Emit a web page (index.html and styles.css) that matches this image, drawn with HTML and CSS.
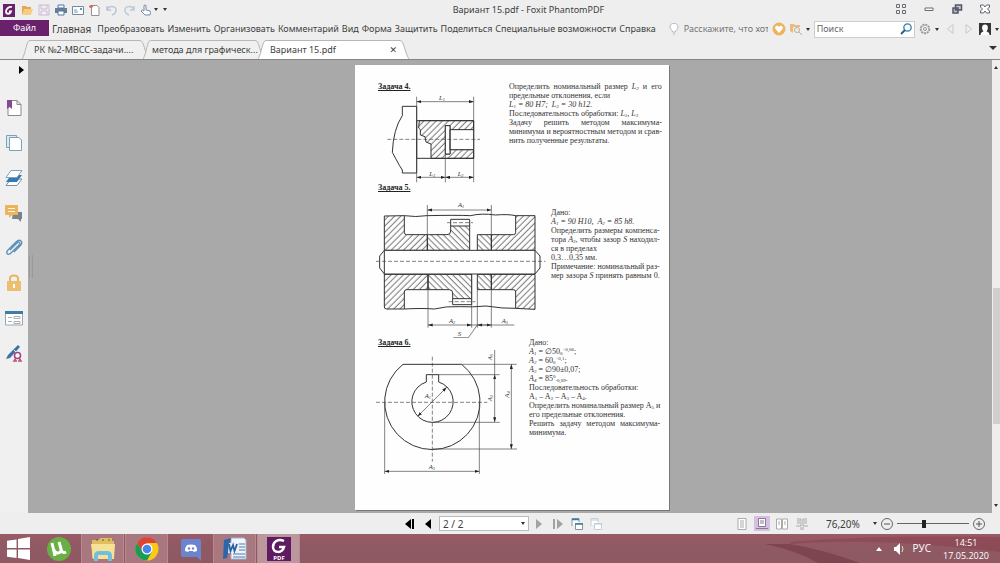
FILE: index.html
```html
<!DOCTYPE html>
<html lang="ru">
<head>
<meta charset="utf-8">
<title>Вариант 15.pdf - Foxit PhantomPDF</title>
<link rel="stylesheet" href="styles.css">
</head>
<body>
<header class="titlebar">
  <div class="quick">
    <svg class="i14" viewBox="0 0 14 14"><path fill="#68216a" d="M1 1h12v13H1z"/><path d="M10 4C7 3 4 6 4 8.500c0 3 4 3 5 0H7" fill="none" stroke="#fff" stroke-width="1.800"/></svg>
    <button aria-label="Открыть"><svg class="i12" viewBox="0 0 12 12"><path fill="#e5a64f" d="M1 11V2h4l1 1h4v2H4z"/><path fill="#f6cd86" d="M3 5h9l-2 6H1z"/></svg></button>
    <button aria-label="Сохранить"><svg class="i12" viewBox="0 0 12 12"><path fill="#f4eff6" stroke="#c9bbd2" d="M1 1h10v10H1zM3 1v4h6V1M3 11V7h6v4"/></svg></button>
    <button aria-label="Печать"><svg class="i12" viewBox="0 0 12 12"><path fill="#667f9b" d="M0 4h12v5H0z"/><path fill="#fff" stroke="#52779e" d="M3 1h6v3H3zM3 7h6v4H3z"/></svg></button>
    <button aria-label="Почта"><svg class="i12" viewBox="0 0 12 12"><path fill="#fff" stroke="#798694" d="M.5 2.500h11v8H.5z"/><path stroke="#6d95bd" fill="none" d="M2 8h4M2 6h3"/><path fill="#559ac7" d="M8 4h2v2H8z"/></svg></button>
    <button aria-label="Создать"><svg class="i12" viewBox="0 0 12 12"><path fill="#fff" stroke="#9b8e8d" d="M2.500 1.500H8l2 2v8H2.500z"/><path d="M2 1v3M0 2.500h4" stroke="#dc6450" stroke-width="1.500"/></svg></button>
    <button aria-label="Отменить"><svg class="i12" viewBox="0 0 12 12"><path d="M1 2v4h4M1 6c2-5 9-4 9 0 0 2-1 4-4 5" fill="none" stroke="#b8c5d5" stroke-width="1.500"/></svg></button>
    <button aria-label="Повторить"><svg class="i12" viewBox="0 0 12 12"><path d="M11 2v4H7M11 6C9 1 2 2 2 6c0 2 1 4 4 5" fill="none" stroke="#b8cbd9" stroke-width="1.500"/></svg></button>
    <button aria-label="Рука" class="hand"><svg class="i12" viewBox="0 0 12 12"><path fill="#fff" stroke="#728ba6" d="M4 7V1.500q1-1 2 0V6l4 1q1 1 0 4H5L1 7q1-2 3 0z"/></svg><i class="caret"></i></button>
    <button aria-label="Настроить" class="more"><i class="caret"></i></button>
  </div>
  <h1>Вариант 15.pdf - Foxit PhantomPDF</h1>
  <div class="window">
    <button aria-label="Сетка"><svg class="i12" viewBox="0 0 12 12"><path fill="none" stroke="#6a6e73" d="M1.500 1.500h3v3h-3zM7.500 1.500h3v3h-3zM1.500 7.500h3v3h-3zM7.500 7.500h3v3h-3z"/></svg></button>
    <button aria-label="Свернуть"><svg class="i12" viewBox="0 0 12 12"><path fill="#fff" stroke="#676b73" d="M2 5h8v2.500H2z"/></svg></button>
    <button aria-label="Развернуть"><svg class="i12" viewBox="0 0 12 12"><path fill="#c1c4ca" stroke="#50576a" stroke-width="1.500" d="M4.500 2h6v5h-6zM2 5h5v5H2z"/></svg></button>
    <button aria-label="Закрыть"><svg class="i12" viewBox="0 0 12 12"><path fill="#fff" stroke="#60656d" d="M1.500 2h3L6 4l1.500-2h3v2L8.500 6l2 2v2h-3L6 8l-1.500 2h-3V8l2-2-2-2z"/></svg></button>
  </div>
</header>
<nav class="menu">
  <button class="file">Файл</button>
  <div class="items">
    <button class="home">Главная</button><button>Преобразовать</button><button>Изменить</button><button>Организовать</button><button>Комментарий</button><button>Вид</button><button>Форма</button><button>Защитить</button><button>Поделиться</button><button>Специальные возможности</button><button>Справка</button>
  </div>
  <div class="tools">
    <svg class="i12" viewBox="0 0 12 12"><path fill="#fff" stroke="#b5b7ba" d="M4.500 9C4.500 7 2 6 2 4c0-5 8-5 8 0 0 2-2.500 3-2.500 5zM5 11h2"/></svg>
    <input class="tell" aria-label="Расскажите, что хотите сделать" value="Расскажите, что хотите">
    <button aria-label="Избранное"><svg class="i14" viewBox="0 0 14 14"><circle cx="7" cy="7" r="6.500" fill="#ecb45e"/><path fill="#fff" d="M7 11L3.500 7C2 4 5.500 2.500 7 5c1.500-2.500 5-1 3.500 2z"/></svg></button>
    <button class="find" aria-label="Найти в папке"><svg class="i12" viewBox="0 0 12 12"><path fill="#edba7d" d="M0 1h4l1 1h5v2H3v6L0 8z"/><circle cx="7" cy="7" r="2.500" fill="#eee" stroke="#c8a888"/><path stroke="#bcae9f" d="m9 9 3 3"/></svg><i class="caret"></i></button>
    <div class="search"><input type="text" aria-label="Поиск" placeholder="Поиск"><button aria-label="Искать"><svg class="i12" viewBox="0 0 12 12"><circle cx="7.500" cy="4.500" r="3.700" fill="#f5fafc" stroke="#397d9f" stroke-width="1.300"/><path stroke="#27618f" stroke-width="2" d="m5 7-4 4"/></svg></button></div>
    <button class="find" aria-label="Параметры"><svg class="i12" viewBox="0 0 12 12"><circle cx="6" cy="6" r="4.500" fill="none" stroke="#929599" stroke-width="1.500" stroke-dasharray="2 1"/><circle cx="6" cy="6" r="3.700" fill="#f5f5f5" stroke="#999" stroke-width=".7"/><circle cx="6" cy="6" r="1.500" fill="none" stroke="#929599"/></svg><i class="caret"></i></button>
    <button class="step" aria-label="Назад"><svg class="i12" viewBox="0 0 12 12"><path fill="none" stroke="#c9c9cb" d="M9 1.500v9L3.500 6z"/></svg></button>
    <button class="step" aria-label="Вперёд"><svg class="i12" viewBox="0 0 12 12"><path fill="none" stroke="#c9c9cb" d="M4 1.500v9L9.500 6z"/></svg></button>
    <button class="find" aria-label="Пользователь"><svg class="i12" viewBox="0 0 12 12"><path fill="#343536" d="M0 0h12v12H0z"/><path fill="#fff" d="M1.500 12q0-3 3-3.500C2 5 3 1.500 6 1.500S10 5 7.500 8.500q3 .5 3 3.500z"/></svg><i class="caret"></i></button>
  </div>
</nav>
<div class="tabs">
  <button class="tab"><svg viewBox="0 0 127 20" preserveAspectRatio="none"><path d="M0 20C4 14 4 .5 8 .5h110c4 0 5 14 9 19.500"/></svg><span>РК №2-МВСС-задачи....</span></button>
  <button class="tab second"><svg viewBox="0 0 127 20" preserveAspectRatio="none"><path d="M0 20C4 14 4 .5 8 .5h110c4 0 5 14 9 19.500"/></svg><span>метода для графическ...</span></button>
  <button class="tab active"><svg viewBox="0 0 151 20" preserveAspectRatio="none"><path d="M0 20C4 14 4 .5 8 .5h134c4 0 5 14 9 19.500"/></svg><span>Вариант 15.pdf</span><b>✕</b></button>
  <i class="caret big"></i>
</div>
<main class="work">
  <aside class="side">
    <button class="expand" aria-label="Развернуть панель"><svg viewBox="0 0 5 8"><path d="M0 0v8l5-4z"/></svg></button>
    <button aria-label="Закладки"><svg viewBox="0 0 18 18"><path fill="#fff" stroke="#91888b" d="M3 1.500h9l4 4v11H3zM12 1.500v4h4"/><path fill="#824b91" d="M2 1h5v9L4.500 8 2 10z"/></svg></button>
    <button aria-label="Страницы"><svg viewBox="0 0 18 18"><path fill="#dcebf2" stroke="#7ba1b8" d="M1.500 1.500h10v12h-10z"/><path fill="#fff" stroke="#7ba1b8" d="M4.500 3.500H14l2.500 2.500v10.500h-12z"/></svg></button>
    <button aria-label="Слои"><svg viewBox="0 0 18 18"><path fill="#fff" stroke="#7293ad" d="M6 10h11l-5 6.500H1z"/><path fill="#3977b2" d="M6 6h11l-5 7H1z"/><path fill="#fff" stroke="#7ca4bc" d="M6 1.500h11l-5 7H1z"/></svg></button>
    <button aria-label="Комментарии"><svg viewBox="0 0 18 18"><path fill="#7b8389" d="M8 8h9v7h-1v3l-3-3H7z"/><path fill="#ecb45f" d="M0 1h13v10H7l-3 3v-3H0z"/><path d="M3 4.500h7M3 7.500h7" stroke="#fff3d8"/></svg></button>
    <button aria-label="Вложения"><svg viewBox="0 0 18 18"><path d="m5 11 7-7c2-2 4 0 2 2l-8 8c-3 3-6 0-3-3l8-8c4-4 8 0 4 4l-6 6" fill="none" stroke="#5b8eb4" stroke-width="1.300"/></svg></button>
    <button aria-label="Защита"><svg viewBox="0 0 18 18"><path d="M5 8V4.500c0-4 8-4 8 0V8" fill="none" stroke="#e9b461" stroke-width="2"/><path fill="#edbd71" d="M2 7h14v10H2z"/><path d="M9 10v4" stroke="#fff" stroke-width="2"/></svg></button>
    <button aria-label="Поля"><svg viewBox="0 0 18 18"><path fill="#fff" stroke="#9ba6b0" d="M.5 3h17v13H.5z"/><path fill="#3e7ba5" d="M0 2h18v3H0z"/><path fill="none" stroke="#a9b0b5" d="M3 8.500h4M9 7.500h6v2H9zM3 12.500h4M9 12.500h6v2H9z"/></svg></button>
    <button aria-label="Подписи"><svg viewBox="0 0 18 18"><path d="m1 15 4-1L15 3l-2-2L3 11z" fill="#3974a5"/><path d="m9 6 2 2" stroke="#fff"/><circle cx="12.500" cy="11.500" r="3" fill="#fff" stroke="#a43f83" stroke-width="1.500"/><path d="m11 14-2 3h3M14 14l2 3h-3" stroke="#b94f76" fill="none" stroke-width="1.500"/></svg></button>
  </aside>
  <div class="canvas">
    <i class="grip"></i>
    <article class="paper">
      <section class="task t4">
        <div>
          <h2>Задача 4.</h2>
          <svg class="fig" viewBox="18 57 393 270" width="131" height="90">
            <defs>
              <pattern id="h" width="13" height="13" patternUnits="userSpaceOnUse" patternTransform="rotate(45)"><path d="M6 0v13" stroke="#333" stroke-width="2"/></pattern>
              <pattern id="g" width="13" height="13" patternUnits="userSpaceOnUse" patternTransform="rotate(-45)"><path d="M6 0v13" stroke="#333" stroke-width="2"/></pattern>
              <marker id="a" viewBox="0 0 12 8" markerUnits="userSpaceOnUse" markerWidth="14" markerHeight="10" refX="12" refY="4" orient="auto-start-reverse"><path fill="#222" d="M0 0l12 4-12 4z"/></marker>
            </defs>
            <g class="ln">
              <path d="M140 97H97v28Q70 165 67 235L88 274l9 14v9h43z"/>
              <path fill="url(#h)" d="M148 140h163v28h-71v-13h-14v85h14v-13h71v26H183v-43l-15-6-3-16-14-5v-16l-5-5z"/>
              <path d="M140 140h171v113H140z"/>
              <path fill="#fff" d="M226 155h14v85h-14zM240 167h71v60h-71z"/>
            </g>
            <path class="thin" d="M140 68v257M311 68v72M311 253v72M226 240v85"/>
            <path class="dash" d="M52 196h278"/>
            <path class="dim" d="M140 83h171"/><path class="dim" d="M140 310h86"/><path class="dim" d="M226 310h85"/>
            <text x="207" y="78">L<tspan dy="3">1</tspan></text><text x="178" y="305">L<tspan dy="3">3</tspan></text><text x="263" y="305">L<tspan dy="3">2</tspan></text>
          </svg>
        </div>
        <div class="prose">
          <p class="fill">Определить номинальный размер <em>L<sub>2</sub></em> и его</p>
          <p>предельные отклонения, если</p>
          <p><em>L<sub>1</sub> = 80 H7;&nbsp; L<sub>3</sub> = 30 h12.</em></p>
          <p>Последовательность обработки: <em>L<sub>1</sub>, L<sub>3</sub></em></p>
          <p class="fill">Задачу решить методом максимума-</p>
          <p class="fill">минимума и вероятностным методом и срав-</p>
          <p>нить полученные результаты.</p>
        </div>
      </section>
      <section class="task t5">
        <div>
          <h2>Задача 5.</h2>
          <svg class="fig" viewBox="18 -3 525 432" width="175" height="144">
            <g class="ln">
              <path fill="url(#h)" d="M43 63l60-1v50q0 7 7 7h62v47H43zM43 238h131v46h-64q-7 0-7 7v51H50q-7 0-7-6z"/>
              <path fill="url(#h)" d="M437 62h58v104H364v-47h66q7 0 7-7zM364 238h131v105l-58-3v-49q0-7-7-7h-66z"/>
              <path fill="url(#g)" d="M172 119h59q11 0 11-11V93h57v73H172zM174 238h131v73h-57v-17q0-10-10-10h-64z"/>
              <path fill="url(#g)" d="M322 119h42v47h-42zM322 238h42v46h-42z"/>
              <path d="M242 93V73h57v20M248 311v18h57v-18M103 62q34 5 68 0 90-2 130 0 34-8 75-2 40-3 61 2M103 342q55-3 90 0 35-9 75-7 40 2 80-2 50 8 89 7"/>
              <path fill="#fff" d="M43 166h452v71H43zM43 166l-14 17v36l14 18M495 166l15 17v36l-15 18"/>
            </g>
            <path class="thin" d="M172 30v90M364 30v90M174 238v160M305 311v87M322 284v114M364 284v114M305 238v73M322 390l-27 38h-45"/>
            <path class="dash" d="M18 199h508M231 83h78M236 320h80"/>
            <path class="dim" d="M172 45h192"/><path class="dim" d="M174 390h131"/><path class="dim" d="M364 390h-42"/><path class="thin" d="M305 390h128"/>
            <text x="264" y="37">A<tspan dy="3">1</tspan></text><text x="237" y="385">A<tspan dy="3">2</tspan></text><text x="395" y="385">A<tspan dy="3">3</tspan></text><text x="263" y="423">S</text>
          </svg>
        </div>
        <div class="prose">
          <p>Дано:</p>
          <p><em>A<sub>1</sub> = 90 H10,&nbsp; A<sub>2</sub> = 85 h8.</em></p>
          <p class="fill">Определить размеры компенса-</p>
          <p class="fill">тора <em>A<sub>3</sub></em>, чтобы зазор <em>S</em> находил-</p>
          <p>ся в пределах</p>
          <p>0,3…0,35 мм.</p>
          <p class="fill">Примечание: номинальный раз-</p>
          <p class="fill">мер зазора <em>S</em> принять равным 0.</p>
        </div>
      </section>
      <section class="task t6">
        <div>
          <h2>Задача 6.</h2>
          <svg class="fig" viewBox="18 42 459 384" width="153" height="128">
            <g class="ln">
              <path d="M99 88h176A143 143 0 1 1 99 88zM169 141v-22h37v22A62 62 0 1 1 169 141z"/>
            </g>
            <path class="thin" d="M275 88h165M206 119h183M187 262h202M187 342h254M44 202v215M328 202v215M374 45v74"/>
            <path class="dash" d="M18 202h334M187 65v315"/>
            <path class="dim" d="M143 244l87-87"/><path class="dim" d="M374 119v142"/><path class="dim" d="M424 88v254"/><path class="dim" d="M44 409h284"/>
            <text x="164" y="190">A<tspan dy="3">1</tspan></text><text x="176" y="401">A<tspan dy="3">3</tspan></text>
            <text transform="translate(367 199) rotate(-90)">A<tspan dy="3">2</tspan></text><text transform="translate(367 76) rotate(-90)">A<tspan dy="3">5</tspan></text><text transform="translate(417 188) rotate(-90)">A<tspan dy="3">4</tspan></text>
          </svg>
        </div>
        <div class="prose">
          <p>Дано:</p>
          <p><em>A<sub>1</sub></em> = ∅50<sub>0</sub><sup>+0,06</sup>;</p>
          <p><em>A<sub>2</sub></em> = 60<sub>0</sub><sup>+0,1</sup>;</p>
          <p><em>A<sub>3</sub></em> = ∅90±0,07;</p>
          <p><em>A<sub>4</sub></em> = 85<sup>0</sup><sub>-0,09</sub>.</p>
          <p>Последовательность обработки:</p>
          <p>A<sub>1</sub> – A<sub>2</sub> – A<sub>3</sub> – A<sub>4</sub>.</p>
          <p class="fill">Определить номинальный размер A<sub>5</sub> и</p>
          <p>его предельные отклонения.</p>
          <p class="fill">Решить задачу методом максимума-</p>
          <p>минимума.</p>
        </div>
      </section>
    </article>
  </div>
  <div class="scroll"><i class="caret"></i><span></span><i class="caret"></i></div>
</main>
<footer class="status">
  <div class="pages">
    <button aria-label="Первая страница"><svg class="i12" viewBox="0 0 12 12"><path d="M7 1v10L1 6zM8 1h2v10H8z"/></svg></button>
    <button aria-label="Предыдущая страница"><svg class="i12" viewBox="0 0 12 12"><path d="M8 1v10L2 6z"/></svg></button>
    <div class="pick page"><select aria-label="Страница"><option>2 / 2</option></select><i class="caret"></i></div>
    <button aria-label="Следующая страница"><svg class="i12" viewBox="0 0 12 12"><path fill="#a2a2a2" d="M3 1v10l6-5z"/></svg></button>
    <button aria-label="Последняя страница"><svg class="i12" viewBox="0 0 12 12"><path fill="#a2a2a2" d="M5 1v10l6-5zM1 1h2v10H1z"/></svg></button>
    <button aria-label="Предыдущий вид"><svg class="i12" viewBox="0 0 12 12"><path fill="#fff" stroke="#8096a4" d="M1 8V.5h7V4M4.500 5.500h7v6h-7z"/><path d="M1 1.500h7M4 6h8" stroke="#397ca3" stroke-width="1.500"/></svg></button>
    <button aria-label="Следующий вид"><svg class="i12" viewBox="0 0 12 12"><path fill="#fff" stroke="#c4ced5" d="M1 8V.5h7V4M4.500 5.500h7v6h-7z"/><path d="M1 2h7M4 6h8" stroke="#b4cddc"/></svg></button>
  </div>
  <div class="view">
    <button aria-label="Одна страница"><svg class="i12" viewBox="0 0 12 12"><path fill="#fff" stroke="#aaa" d="M2 .5h8v11H2zM4 3h4M4 5h4M4 7h4M4 9h4"/></svg></button>
    <button class="on" aria-label="Непрерывно"><svg class="i12" viewBox="0 0 12 12"><path fill="#fff" stroke="#857b96" d="M2.500.5h7v8h-7zM4 3h4M4 5h4M0 10.500h12"/></svg></button>
    <button aria-label="Разворот"><svg class="i12" viewBox="0 0 12 12"><path fill="#fff" stroke="#aaa" d="M.5 1h5v10h-5zM6.500 1h5v10h-5zM2 4h2M2 6h2M8 4h2M8 6h2"/></svg></button>
    <button aria-label="Непрерывный разворот"><svg class="i12" viewBox="0 0 12 12"><path fill="none" stroke="#aaa" d="M1 1h4v7H0M11 1H7v7h5M5 12V9M7 12V9M1 3h3M1 5h3M8 3h3M8 5h3"/></svg></button>
    <div class="pick zoom"><select aria-label="Масштаб"><option>76,20%</option></select><i class="caret"></i></div>
    <button aria-label="Уменьшить"><svg class="i12" viewBox="0 0 12 12"><circle cx="6" cy="6" r="5.500" fill="none" stroke="#666"/><path stroke="#555" d="M3 6h6"/></svg></button>
    <input type="range" aria-label="Масштаб страницы" value="37">
    <button aria-label="Увеличить"><svg class="i12" viewBox="0 0 12 12"><circle cx="6" cy="6" r="5.500" fill="none" stroke="#666"/><path stroke="#555" d="M3 6h6M6 3v6"/></svg></button>
  </div>
</footer>
<div class="taskbar">
  <svg class="swoosh" viewBox="0 0 240 29" preserveAspectRatio="none"><path fill="#733946" opacity=".6" d="M5 10h25q35 6 70 19H58Q38 17 5 10z"/><path fill="#873c4a" opacity=".45" d="M30 8q80-7 210-5v15Q120 3 30 10z"/></svg>
  <button class="start" aria-label="Пуск"><svg viewBox="0 0 24 24"><path fill="#fff" d="M0 4l10-1.500v9H0zM11.500 2 24 0v11.500H11.500zM0 13h10v9L0 20.500zM11.500 13H24v11l-12.500-2z"/></svg></button>
  <button aria-label="uTorrent"><svg viewBox="0 0 24 24"><circle cx="12" cy="12" r="12" fill="#68b043"/><path d="M5 6l3 13M7 13c2 5 8 3 7-1l-2-7M14 12c1 4 3 4 5 3" fill="none" stroke="#fff" stroke-width="3"/></svg></button>
  <button class="open" aria-label="Проводник"><svg viewBox="0 0 24 24"><path fill="#dfbd60" d="M1 3h7l1-2h12v3h2v17H1z"/><path fill="#f5e294" d="M0 7h24l-1 15H2z"/><path d="M5 24v-5q0-3 3-3h8q3 0 3 3v5" fill="none" stroke="#72bee0" stroke-width="4"/><path stroke="#675c42" d="M5 3h2M11 3h2M17 3h2"/></svg></button>
  <button class="open" aria-label="Chrome"><svg viewBox="0 0 24 24"><circle cx="12" cy="12" r="11.500" fill="#fbc916"/><path fill="#db4437" d="M2 6A11.500 11.500 0 0 1 22 6H12l-5 9z"/><path fill="#1c9c57" d="M2 6a11.500 11.500 0 0 0 10 17.500l5-9-9 1z"/><circle cx="12" cy="12" r="5.500" fill="#fff"/><circle cx="12" cy="12" r="4.300" fill="#4685ed"/></svg></button>
  <button aria-label="Discord"><svg viewBox="0 0 24 24"><path fill="#6c83d0" d="M4 2h16q2 0 2 2v20l-4-4H4q-2 0-2-2V4q0-2 2-2z"/><path fill="#fff" d="M8 8q4-1 8 0 2 2 2 6l-3 1-1-1h-4l-1 1-3-1q0-4 2-6z"/><circle cx="10" cy="11.500" r="1.200" fill="#6c83d0"/><circle cx="14" cy="11.500" r="1.200" fill="#6c83d0"/></svg></button>
  <button class="open" aria-label="Word"><svg viewBox="0 0 24 24"><path fill="#f2f5fa" stroke="#9fb6d0" d="M8 1h13l2 2v19H8z"/><path stroke="#467bb4" d="M16 7h6M16 10h6M16 13h6M10 17h12M10 20h12"/><path fill="#2c66a8" d="M1 3l7-2-4 20-4 1z"/><path fill="#e8eff7" d="M6 6h10v10H5z"/><path d="m6 7 1.500 7L10 8l1.500 6L14 7" fill="none" stroke="#2c5f9e" stroke-width="1.800"/></svg></button>
  <button class="open current" aria-label="Foxit PhantomPDF"><svg viewBox="0 0 24 24"><path fill="#5f1b62" d="M0 0h24v24H0z"/><path d="M17 4C11 1 6 5 6 10c0 6 9 7 11 0h-5" fill="none" stroke="#fff" stroke-width="2.500"/><text x="12" y="23" text-anchor="middle">PDF</text></svg></button>
  <div class="tray">
    <button aria-label="Скрытые значки"><svg class="i12" viewBox="0 0 12 12"><path fill="#fff" d="M3 8l3-4 3 4z"/></svg></button>
    <button aria-label="Громкость"><svg class="i12" viewBox="0 0 12 12"><path fill="#fff" d="M1 4h2l4-4v12L3 8H1z"/><path d="M9 3q2 3 0 6" fill="none" stroke="#ddb" /></svg></button>
    <span>РУС</span>
    <time>14:51<br>17.05.2020</time>
  </div>
</div>
</body>
</html>
```
FILE: styles.css
```css
* { box-sizing: border-box; }
body { margin: 0; height: 100vh; display: flex; flex-direction: column; background: #eeeeee; color: #404040; font: 9px/12px "Noto Sans", sans-serif; overflow: hidden; }
button { border: 0; padding: 0; margin: 0; background: none; font: inherit; color: inherit; white-space: nowrap; display: flex; align-items: center; justify-content: center; }
input, select { font: inherit; color: inherit; border: 0; padding: 0; margin: 0; min-width: 0; }
svg { display: block; flex: none; }
.i12 { width: 12px; height: 12px; }
.i14 { width: 14px; height: 14px; }
.caret { width: 0; height: 0; flex: none; border: 2px solid transparent; border-top: 3px solid #333; border-bottom: 0; }
.caret.big { border-width: 4px 4px 0; margin: 6px 3px 0 auto; }

.titlebar { display: flex; align-items: center; height: 19px; }
.quick { display: flex; align-items: center; gap: 5px; padding-left: 2px; width: 166px; }
.hand { gap: 2px; }
.titlebar h1 { flex: 1; margin: 0; padding-right: 4px; text-align: center; font-size: 9px; line-height: 12px; font-weight: 400; }
.window { display: flex; gap: 16px; padding: 0 9px 2px 0; }

.menu { display: flex; align-items: center; height: 20px; }
.file { align-self: stretch; width: 49px; margin: 1px 0 3px; background: #68216a; color: #fff; }
.items { display: flex; gap: 3px; padding-left: 3px; align-items: center; }
.home { font-size: 10px; margin-right: 3px; }
.tools { display: flex; align-items: center; flex: 1; min-width: 0; gap: 4px; margin-left: 12px; padding-right: 1px; }
.tell { width: 84px; background: none; color: #777; }
.find { gap: 4px; }
.search { display: flex; flex: 1; height: 17px; background: #fff; border: 1px solid #ccc; padding: 0 2px; }
.search input { flex: 1; background: none; width: 0; }
.search input::placeholder { color: #666; }
.step { margin: 0 1px; }

.tabs { display: flex; height: 21px; padding: 1px 0 0 22px; background: #eeeeee; border-bottom: 1px solid #858585; }
.tab { position: relative; width: 127px; margin-right: -6px; padding: 0 12px; justify-content: flex-start; }
.tab svg { position: absolute; inset: 0; width: 100%; height: 100%; }
.tab path { fill: #f0f0f0; stroke: #b2b2b2; }
.tab span, .tab b { position: relative; }
.tab b { margin-left: auto; font: 9px/12px "DejaVu Sans", sans-serif; }
.tab.second { width: 121px; padding: 0 9px; }
.tab.active { width: 151px; }
.tab.active path { fill: #fff; }

.work { flex: 1; min-height: 0; display: flex; }
.side { width: 28px; display: flex; flex-direction: column; align-items: center; gap: 17px; padding-top: 6px; background: #f0f0f0; }
.side svg { width: 18px; height: 18px; }
.side .expand { align-self: flex-end; margin: 0 4px 8px; }
.side .expand svg { width: 5px; height: 8px; }
.canvas { position: relative; flex: 1; padding: 5px 0 3px 4px; background: #a9a9a9; display: flex; justify-content: center; align-items: stretch; }
.grip { position: absolute; left: 1px; top: 195px; width: 4px; height: 23px; border: solid #999; border-width: 0 1px; }
.scroll { width: 8px; background: #eeeeee; display: flex; flex-direction: column; align-items: center; justify-content: space-between; padding: 6px 0; }
.scroll span { width: 7px; height: 136px; margin: auto 0 80px; background: #cfcfcf; }
.scroll .caret:first-child { transform: rotate(180deg); }
.paper { width: 314px; background: #fefefe; box-shadow: 1px 1px 0 #777; padding: 17px 14px 0 21px; color: #333; font: 8px/9px "Liberation Serif", serif; }
.task { display: flex; }
.task h2 { margin: 0 0 1px; padding-left: 2px; font-size: 8px; line-height: 10px; text-decoration: underline; color: #222; }
.t4 .prose { padding-left: 2px; }
.t5 .prose { padding-top: 25px; }
.prose { flex: 1; white-space: nowrap; }
.prose p { margin: 0; height: 9px; }
.prose .fill { text-align-last: justify; }
.prose sub, .prose sup { font-size: 5px; line-height: 0; vertical-align: -1px; }
.prose sup { vertical-align: 3px; }
.fig { fill: none; }
.fig text { fill: #333; font: italic 20px "Liberation Serif", serif; }
.fig tspan { font-size: 13px; }
.ln { stroke: #333; stroke-width: 3; }
.thin, .dim, .dash { stroke: #444; stroke-width: 2; }
.dim { marker-start: url(#a); marker-end: url(#a); }
.dash { stroke-dasharray: 12 6; }

.status { display: grid; grid-template-columns: 1fr auto 1fr; align-items: center; height: 21px; }
.pages { grid-column: 2; display: flex; align-items: center; gap: 7px; padding-left: 6px; }
.view { display: flex; align-items: center; justify-content: flex-end; gap: 4px; padding-right: 15px; }
.view .on { background: #d7bfe2; height: 15px; }
.view > button:nth-child(-n+4) { width: 16px; }
.pick { display: flex; align-items: center; }
.pick select { appearance: none; background: none; }
.page { width: 90px; height: 15px; margin: 0 -3px; background: #fff; border: 1px solid #bbb; padding: 0 3px; }
.page select { flex: 1; font-size: 10px; }
.zoom { margin-left: 12px; }
.zoom select { width: 47px; font-size: 10px; }
input[type=range] { appearance: none; width: 72px; height: 12px; background: linear-gradient(#666, #666) center / 100% 1px no-repeat; }
input[type=range]::-webkit-slider-thumb { appearance: none; width: 4px; height: 8px; background: #222; }

.taskbar { position: relative; display: flex; gap: 1px; height: 29px; background: linear-gradient(#995b65, #905963 40%, #8d5962); color: #fff; }
.swoosh { position: absolute; right: 0; top: 0; width: 24%; height: 100%; }
.taskbar > button { position: relative; width: 43px; }
.taskbar > .start { width: 36px; }
.taskbar > button svg { width: 24px; height: 24px; }
.taskbar > .start svg { width: 23px; height: 23px; }
.taskbar .open { background: #a9777f; border: solid #b8898f; border-width: 0 1px; }
.taskbar .current { background: #bc969d; }
.taskbar text { fill: #fff; font: bold 6px "Open Sans", sans-serif; }
.tray { position: relative; display: flex; align-items: center; gap: 8px; margin-left: auto; padding-right: 11px; font: 9px/13px "Open Sans", sans-serif; }
.tray span { font-size: 10px; }
.tray time { text-align: center; margin-left: 4px; }
```
